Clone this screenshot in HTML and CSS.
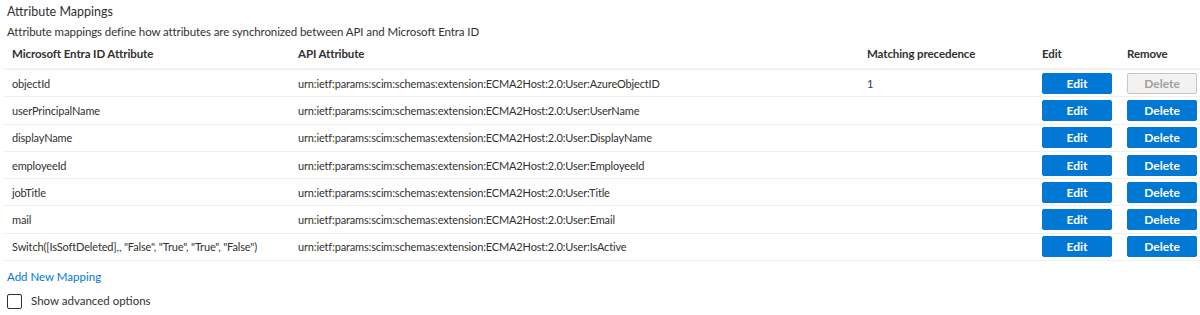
FILE: index.html
```html
<!DOCTYPE html>
<html lang="en">
<head>
    <meta charset="UTF-8">
    <title>Attribute Mappings</title>
    <link rel="stylesheet" href="styles.css">
</head>
<body>
    <div class="section">
        <div class="title">Attribute Mappings</div>
        <div class="subtitle">Attribute mappings define how attributes are synchronized between API and Microsoft Entra ID</div>

        <div class="mapping-grid">
            <div class="row head">
                <div class="cell">Microsoft Entra ID Attribute</div>
                <div class="cell">API Attribute</div>
                <div class="cell">Matching precedence</div>
                <div class="cell">Edit</div>
                <div class="cell">Remove</div>
            </div>
            <div class="row">
                <div class="cell">objectId</div>
                <div class="cell">urn:ietf:params:scim:schemas:extension:ECMA2Host:2.0:User:AzureObjectID</div>
                <div class="cell prec">1</div>
                <div class="cell"><button class="btn">Edit</button></div>
                <div class="cell"><button class="btn" disabled>Delete</button></div>
            </div>
            <div class="row">
                <div class="cell">userPrincipalName</div>
                <div class="cell">urn:ietf:params:scim:schemas:extension:ECMA2Host:2.0:User:UserName</div>
                <div class="cell"></div>
                <div class="cell"><button class="btn">Edit</button></div>
                <div class="cell"><button class="btn">Delete</button></div>
            </div>
            <div class="row">
                <div class="cell">displayName</div>
                <div class="cell">urn:ietf:params:scim:schemas:extension:ECMA2Host:2.0:User:DisplayName</div>
                <div class="cell"></div>
                <div class="cell"><button class="btn">Edit</button></div>
                <div class="cell"><button class="btn">Delete</button></div>
            </div>
            <div class="row">
                <div class="cell">employeeId</div>
                <div class="cell">urn:ietf:params:scim:schemas:extension:ECMA2Host:2.0:User:EmployeeId</div>
                <div class="cell"></div>
                <div class="cell"><button class="btn">Edit</button></div>
                <div class="cell"><button class="btn">Delete</button></div>
            </div>
            <div class="row">
                <div class="cell">jobTitle</div>
                <div class="cell">urn:ietf:params:scim:schemas:extension:ECMA2Host:2.0:User:Title</div>
                <div class="cell"></div>
                <div class="cell"><button class="btn">Edit</button></div>
                <div class="cell"><button class="btn">Delete</button></div>
            </div>
            <div class="row">
                <div class="cell">mail</div>
                <div class="cell">urn:ietf:params:scim:schemas:extension:ECMA2Host:2.0:User:Email</div>
                <div class="cell"></div>
                <div class="cell"><button class="btn">Edit</button></div>
                <div class="cell"><button class="btn">Delete</button></div>
            </div>
            <div class="row">
                <div class="cell">Switch([IsSoftDeleted],, "False", "True", "True", "False")</div>
                <div class="cell">urn:ietf:params:scim:schemas:extension:ECMA2Host:2.0:User:IsActive</div>
                <div class="cell"></div>
                <div class="cell"><button class="btn">Edit</button></div>
                <div class="cell"><button class="btn">Delete</button></div>
            </div>
        </div>

        <a href="#" class="add-link">Add New Mapping</a>

        <label class="check">
            <span class="box"></span>
            Show advanced options
        </label>
    </div>
</body>
</html>
```

FILE: styles.css
```css
body {
    margin: 0;
    font-family: Lato, "Open Sans", sans-serif;
    font-size: 11.5px;
    color: #323130;
    background-color: #fff;
}
.section {
    padding: 3px 0 0 4px;
}
.title {
    font-size: 12.5px;
    padding-left: 3px;
    line-height: 18px;
}
.subtitle {
    padding-left: 3px;
    margin-top: 2px;
    line-height: 18px;
    letter-spacing: -0.1px;
}
.mapping-grid {
    margin-top: 4px;
}
.row {
    display: grid;
    grid-template-columns: 286px 569px 175px 85px 81px;
    align-items: center;
    height: 26.3px;
    border-bottom: 1px solid #f0efee;
    font-size: 11px;
    letter-spacing: -0.15px;
}
.row.head {
    height: 21px;
    padding-top: 2px;
    border-bottom: 2px solid #f3f2f1;
    font-size: 11.5px;
    font-weight: 700;
    letter-spacing: -0.1px;
    align-items: start;
}
.cell {
    padding-left: 8px;
    white-space: nowrap;
}
.cell.prec {
    color: #243a5e;
}
.btn {
    width: 70px;
    height: 21px;
    padding: 0;
    border: 1px solid #0078d4;
    border-radius: 2px;
    background-color: #0078d4;
    color: #fff;
    font-family: inherit;
    font-size: 12px;
    font-weight: 700;
    cursor: pointer;
}
.btn:disabled {
    background-color: #f3f2f1;
    border-color: #c8c6c4;
    color: #a19f9d;
    cursor: default;
}
.add-link {
    display: block;
    margin: 7px 0 0 3px;
    color: #0078d4;
    text-decoration: none;
    line-height: 18px;
}
.check {
    display: flex;
    align-items: center;
    gap: 9px;
    margin: 6px 0 0 3px;
    line-height: 18px;
}
.box {
    width: 13px;
    height: 13px;
    border: 1px solid #323130;
    border-radius: 2px;
}
```
